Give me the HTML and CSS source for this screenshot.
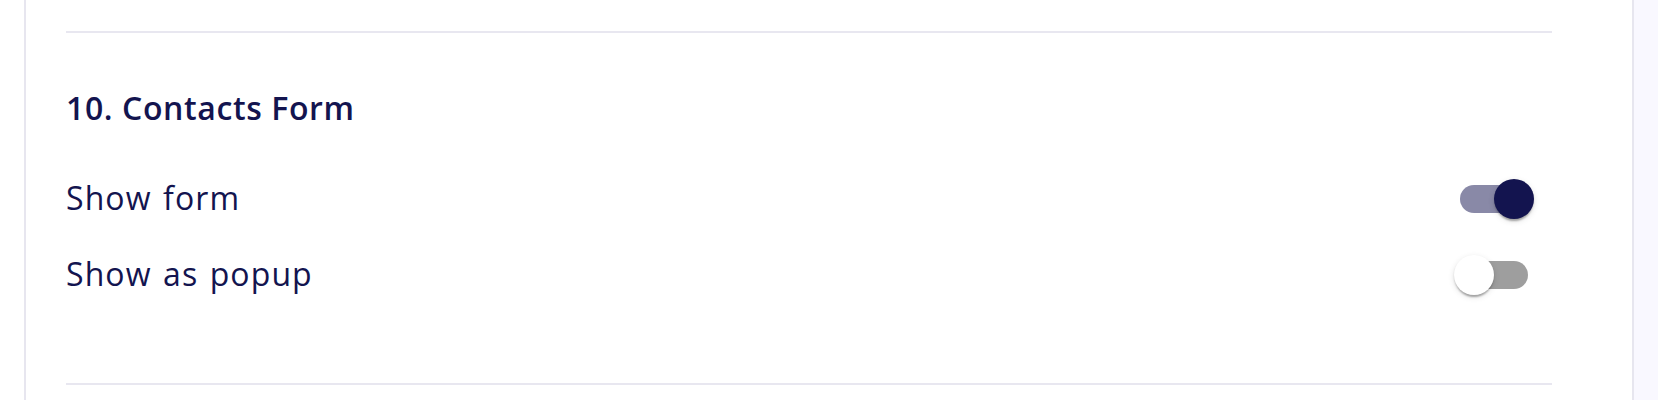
FILE: index.html
```html
<!DOCTYPE html>
<html lang="en">
<head>
<meta charset="utf-8">
<title>Contacts Form</title>
<link rel="stylesheet" href="styles.css">
</head>
<body>
<div class="page">
  <div class="gutter"></div>
  <main class="card">
    <hr class="divider">
    <section class="section">
      <h2 class="section-title">10. Contacts Form</h2>
      <div class="row">
        <span class="label">Show form</span>
        <span class="switch checked"><span class="track"></span><span class="thumb"></span></span>
      </div>
      <div class="row">
        <span class="label">Show as popup</span>
        <span class="switch"><span class="track"></span><span class="thumb"></span></span>
      </div>
    </section>
    <hr class="divider">
  </main>
  <div class="aside"></div>
</div>
</body>
</html>
```
FILE: styles.css
```css
html, body {
  margin: 0;
  padding: 0;
  background: #ffffff;
}
body {
  font-family: "Open Sans", "Noto Sans", sans-serif;
  color: #13144f;
}
.page {
  display: flex;
  height: 400px;
  overflow: hidden;
}
.gutter {
  width: 24px;
  flex: none;
  background: #ffffff;
}
.card {
  flex: 1;
  border-left: 2px solid #e7e6ef;
  border-right: 2px solid #e7e6ef;
  padding: 31px 80px 0 40px;
  background: #ffffff;
}
.aside {
  width: 24px;
  flex: none;
  background: #f9f8ff;
}
.divider {
  margin: 0;
  border: 0;
  height: 2px;
  background: #e8e7f0;
}
.section {
  padding: 51px 0 70px;
}
.section-title {
  margin: 0 0 29px;
  font-size: 32px;
  line-height: 48px;
  font-weight: 600;
  letter-spacing: 0.6px;
}
.row {
  display: flex;
  align-items: center;
  justify-content: space-between;
  height: 76px;
}
.label {
  font-size: 32px;
  line-height: 48px;
  font-weight: 400;
  letter-spacing: 1.1px;
  word-spacing: 2px;
  margin-top: -2px;
}
.switch {
  position: relative;
  width: 116px;
  height: 76px;
  padding: 24px;
  box-sizing: border-box;
  flex: none;
}
.track {
  display: block;
  width: 68px;
  height: 28px;
  border-radius: 14px;
  background: #000000;
  opacity: 0.38;
}
.thumb {
  position: absolute;
  top: 18px;
  left: 18px;
  width: 40px;
  height: 40px;
  border-radius: 50%;
  background: #ffffff;
  box-shadow: 0 4px 2px -2px rgba(0,0,0,0.2), 0 2px 2px 0 rgba(0,0,0,0.14), 0 2px 6px 0 rgba(0,0,0,0.12);
}
.switch.checked .track {
  background: #13144f;
  opacity: 0.5;
}
.switch.checked .thumb {
  left: 58px;
  background: #13144f;
}
```
